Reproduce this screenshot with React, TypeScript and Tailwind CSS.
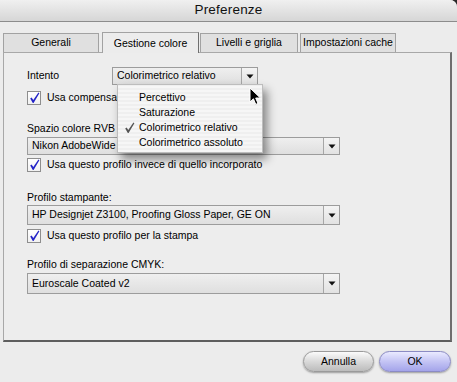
import React from 'react';

const Triangle = () => (
  <svg width="8" height="5" viewBox="0 0 8 5">
    <path d="M0.5 0.5 H7.5 L4 4.5 Z" fill="#111" />
  </svg>
);

const Tick = ({ color = '#2424c8' }: { color?: string }) => (
  <svg width="11" height="12" viewBox="0 0 11 12">
    <path
      d="M1.2 6.6 L2.6 5.6 L4.3 8 L9.4 0.6 L10.4 1.2 L4.6 11 L3.8 11 Z"
      fill={color}
    />
  </svg>
);

const Checkbox = ({ label }: { label: string }) => (
  <div className="flex items-center h-[14px]">
    <div className="w-[14px] h-[14px] border border-[#8e8e8e] bg-gradient-to-b from-white to-[#f1f1f1] flex items-center justify-center">
      <Tick />
    </div>
    <span className="ml-[6px] text-[10.5px] text-black whitespace-nowrap">{label}</span>
  </div>
);

type SelectProps = { value: string; className: string };

const Select = ({ value, className }: SelectProps) => (
  <div className={`flex border border-[#9c9c9c] bg-gradient-to-b from-[#efefef] to-[#dfdfdf] ${className}`}>
    <div className="flex-1 flex items-center pl-[4px] text-[10.5px] text-black whitespace-nowrap overflow-hidden">
      {value}
    </div>
    <div className="w-[16px] border-l border-[#a6a6a6] bg-gradient-to-b from-[#f4f4f4] to-[#e2e2e2] flex items-center justify-center">
      <Triangle />
    </div>
  </div>
);

const Label = ({ children, className = '' }: { children: React.ReactNode; className?: string }) => (
  <div className={`h-[14px] leading-[14px] text-[10.5px] text-black ${className}`}>{children}</div>
);

const App = () => {
  const menuItems = ['Percettivo', 'Saturazione', 'Colorimetrico relativo', 'Colorimetrico assoluto'];

  return (
    <div className="w-[457px] h-[382px] bg-[#2a2a2a] overflow-hidden font-['Liberation_Sans',Arial,sans-serif]">
      <div className="relative w-[457px] h-[382px] bg-[#ececec] rounded-tr-[7px] overflow-hidden">
        {/* title bar */}
        <div className="h-[22px] bg-gradient-to-b from-[#f0f0f0] to-[#d6d6d6] border-b border-[#8c8c8c] flex items-center justify-center">
          <span className="text-[13.5px] text-[#111] tracking-[0.2px]">Preferenze</span>
        </div>

        {/* tabs */}
        <div className="flex items-end h-[20px] mt-[10px] pl-[3px]">
          <div className="w-[96px] h-[19px] border border-b-0 border-[#a2a2a2] bg-[#e0e0e0] flex items-center justify-center text-[10.5px]">
            Generali
          </div>
          <div className="relative z-10 ml-[3px] w-[97px] h-[21px] -mb-px border border-b-0 border-[#a2a2a2] border-r-[#6f6f6f] bg-[#ececec] flex items-center justify-center text-[10.5px] pt-[1px]">
            Gestione colore
          </div>
          <div className="ml-[1px] w-[98px] h-[19px] border border-b-0 border-[#a2a2a2] bg-[#e0e0e0] flex items-center justify-center text-[10.5px]">
            Livelli e griglia
          </div>
          <div className="ml-[2px] w-[96px] h-[19px] border border-b-0 border-[#a2a2a2] bg-[#e0e0e0] flex items-center justify-center text-[10.5px]">
            Impostazioni cache
          </div>
        </div>

        {/* panel */}
        <div className="ml-[3px] w-[449px] h-[290px] border border-[#a8a8a8] border-r-[#6e6e6e] border-b-[#5e5e5e] border-r-2 border-b-2 bg-[#ededed] pt-[14px] pl-[23px]">
          <div className="flex items-center h-[18px]">
            <div className="w-[85px] text-[10.5px]">Intento</div>
            <Select value="Colorimetrico relativo" className="w-[146px] h-[18px]" />
          </div>
          <div className="mt-[6px]">
            <Checkbox label="Usa compensa" />
          </div>

          <Label className="mt-[16px]">Spazio colore RVB</Label>
          <Select value="Nikon AdobeWide" className="mt-[2px] w-[313px] h-[18px]" />
          <div className="mt-[3px]">
            <Checkbox label="Usa questo profilo invece di quello incorporato" />
          </div>

          <Label className="mt-[18px]">Profilo stampante:</Label>
          <Select value="HP Designjet Z3100, Proofing Gloss Paper, GE ON" className="mt-[1px] w-[313px] h-[20px]" />
          <div className="mt-[4px]">
            <Checkbox label="Usa questo profilo per la stampa" />
          </div>

          <Label className="mt-[14px]">Profilo di separazione CMYK:</Label>
          <Select value="Euroscale Coated v2" className="mt-[2px] w-[313px] h-[21px]" />
        </div>

        {/* buttons */}
        <div className="flex justify-end gap-[5px] pr-[6px] mt-[9px]">
          <button className="w-[71px] h-[21px] rounded-full border border-[#9a9a9a] bg-gradient-to-b from-[#fbfbfb] via-[#d9d9d9] to-[#bcbcbc] shadow-[0_1px_2px_rgba(0,0,0,0.35)] text-[10.5px] text-black">
            Annulla
          </button>
          <button className="w-[72px] h-[21px] rounded-full border border-[#8b8bc4] bg-gradient-to-b from-[#eaeaff] via-[#c4c4f4] to-[#a4a4ea] shadow-[0_1px_2px_rgba(0,0,0,0.35)] text-[10.5px] text-black">
            OK
          </button>
        </div>

        {/* open popup menu */}
        <div className="absolute left-[117px] top-[84px] w-[146px] h-[69px] border border-[#bdbdbd] bg-[repeating-linear-gradient(0deg,#f6f6f6_0px,#f6f6f6_2px,#efefef_2px,#efefef_4px)] shadow-[4px_6px_9px_rgba(0,0,0,0.45)] pt-[5px]">
          {menuItems.map((item) => (
            <div key={item} className="relative h-[15px] leading-[15px] pl-[21px] text-[10.5px] text-black whitespace-nowrap">
              {item === 'Colorimetrico relativo' && (
                <span className="absolute left-[6px] top-[2px]">
                  <Tick color="#555" />
                </span>
              )}
              {item}
            </div>
          ))}
        </div>

        {/* mouse cursor */}
        <svg className="absolute left-[249px] top-[87px]" width="13" height="19" viewBox="0 0 13 19">
          <path
            d="M1 1 L1 15 L4.4 11.8 L6.8 17.4 L9 16.4 L6.7 11 L11.4 11 Z"
            fill="#000"
            stroke="#fff"
            strokeWidth="1"
            strokeLinejoin="round"
          />
        </svg>
      </div>
    </div>
  );
};

export default App;
